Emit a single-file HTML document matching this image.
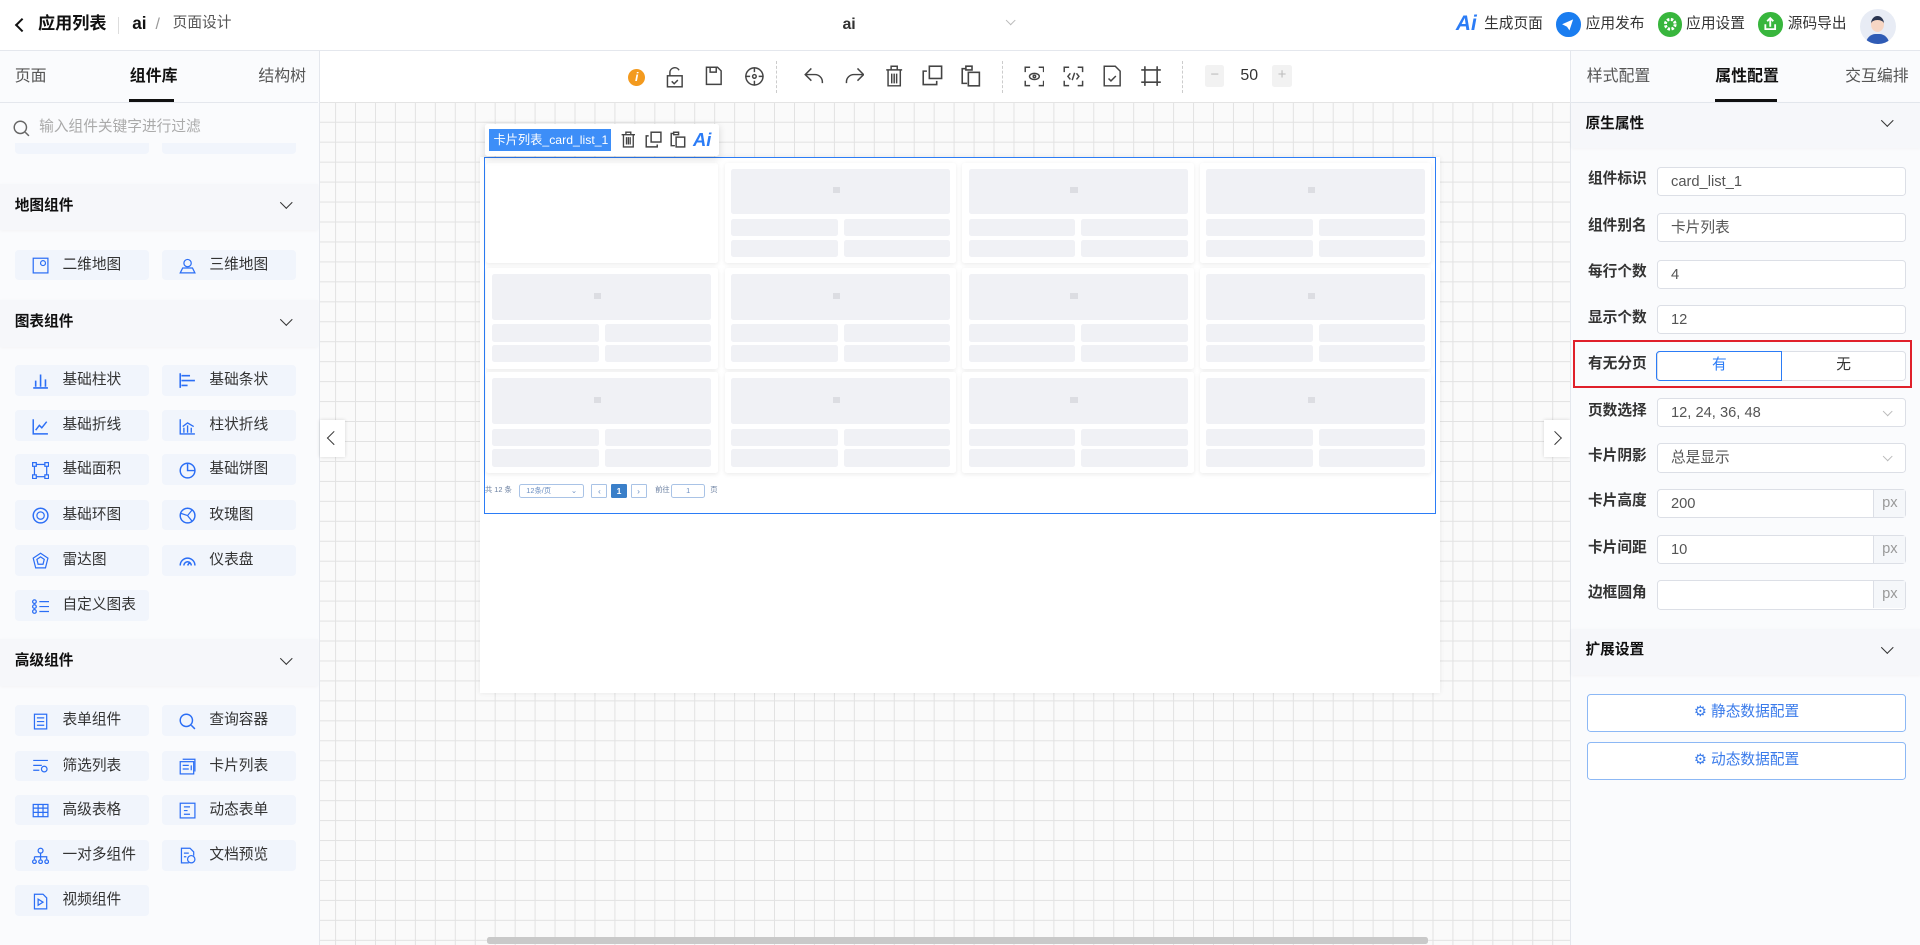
<!DOCTYPE html>
<html><head><meta charset="utf-8"><style>
*{box-sizing:border-box;margin:0;padding:0}
html,body{width:1920px;height:945px;overflow:hidden;background:#fff}
#w{zoom:1.2245;width:1568px;height:772px;position:relative;font-family:"Liberation Sans","Noto Sans CJK SC",sans-serif;font-size:12px;color:#333;line-height:1.2}
.a{position:absolute}
.hdr{left:0;top:0;width:1568px;height:42px;border-bottom:1px solid #e4e7ed;background:#fff}
.lp{left:0;top:42px;width:261px;height:730px;border-right:1px solid #e4e7ed;background:#fafbfd;overflow:hidden}
.rp{left:1282px;top:42px;width:286px;height:730px;border-left:1px solid #e4e7ed;background:#fafbfd}
.tab{position:absolute;top:0;height:42px;line-height:42px;font-size:13px;color:#555}
.tab.on{color:#111;font-weight:bold}
.sec{position:absolute;left:0;width:260px;height:38px;background:#f6f7fa;box-shadow:0 1px 3px rgba(0,0,0,.04);font-weight:bold;font-size:12px;color:#111;line-height:36px;padding-left:12px}
.chev{position:absolute;width:8px;height:8px;border-right:1.3px solid #333;border-bottom:1.3px solid #333;transform:rotate(45deg)}
.it{position:absolute;width:110px;height:25px;background:#f1f5fc;border-radius:3px;line-height:25px;font-size:12px;color:#333;padding-left:39px}
.it svg{position:absolute;left:14px;top:6px}
.cv{left:261px;top:84px;width:1021px;height:688px;background-color:#fafafa;background-image:linear-gradient(#e2e2e2 1px,transparent 1px),linear-gradient(90deg,#e2e2e2 1px,transparent 1px);background-size:16.3px 16.3px;background-position:-4px -1px}
.tb{left:261px;top:42px;width:1021px;height:42px;background:#fff;border-bottom:1px solid #e4e4e4}
.card{position:absolute;background:#fff;box-shadow:0 1px 4px rgba(0,0,0,.08);border-radius:2px}
.g{position:absolute;background:#f0f1f5;border-radius:2px}
.lbl{position:absolute;left:14px;font-size:12px;color:#333;font-weight:bold;line-height:14px}
.inp{position:absolute;left:70px;width:204px;height:24px;border:1px solid #dcdfe6;border-radius:3px;background:#fff;font-size:12px;color:#555;line-height:24px;padding-left:11px}
.px{position:absolute;right:0;top:0;width:26px;height:22px;background:#f5f7fa;border-left:1px solid #dcdfe6;color:#999;text-align:center;line-height:22px}
.btn{position:absolute;left:13px;width:261px;height:31px;border:1px solid #8cb8f5;border-radius:3px;background:#fff;color:#3a7bea;text-align:center;line-height:29px;font-size:12px}
</style></head><body><div id="w">

<div class="a hdr">
 <div class="a" style="left:14px;top:16px;width:8px;height:8px;border-left:2px solid #111;border-bottom:2px solid #111;transform:rotate(45deg)"></div>
 <div class="a" style="left:31px;top:11px;font-size:14px;font-weight:bold;color:#111">应用列表</div>
 <div class="a" style="left:96px;top:14px;width:1px;height:14px;background:#ddd"></div>
 <div class="a" style="left:108px;top:11px;font-size:14px;font-weight:bold;color:#111">ai</div>
 <div class="a" style="left:127px;top:12px;font-size:13px;color:#999">/</div>
 <div class="a" style="left:141px;top:12px;font-size:12px;color:#555">页面设计</div>
 <div class="a" style="left:688px;top:12px;font-size:13px;font-weight:bold;color:#333">ai</div>
 <div class="chev" style="left:822px;top:14px;border-color:#bbb;width:6px;height:6px;border-width:1px"></div>
 <div class="a" style="left:1189px;top:10px;font-size:17px;font-weight:bold;font-style:italic;color:#2b7cf6">Ai</div>
 <div class="a" style="left:1212px;top:13px;font-size:12px;color:#333">生成页面</div>
 <div class="a" style="left:1271px;top:10px;width:20px;height:20px;border-radius:50%;background:#1a7df0"><svg width="20" height="20" viewBox="0 0 20 20"><path d="M5 10l9-4-3 9-2-3z" fill="#fff"/></svg></div>
 <div class="a" style="left:1295px;top:13px;font-size:12px;color:#333">应用发布</div>
 <div class="a" style="left:1354px;top:10px;width:20px;height:20px;border-radius:50%;background:#38b63d"><svg width="20" height="20" viewBox="0 0 20 20"><circle cx="10" cy="10" r="4" fill="none" stroke="#fff" stroke-width="2.4" stroke-dasharray="2 1.2"/></svg></div>
 <div class="a" style="left:1377px;top:13px;font-size:12px;color:#333">应用设置</div>
 <div class="a" style="left:1436px;top:10px;width:20px;height:20px;border-radius:50%;background:#38b63d"><svg width="20" height="20" viewBox="0 0 20 20"><path d="M6 10v4h8v-4M10 12V5M7.5 7.5L10 5l2.5 2.5" fill="none" stroke="#fff" stroke-width="1.5"/></svg></div>
 <div class="a" style="left:1460px;top:13px;font-size:12px;color:#333">源码导出</div>
 <div class="a" style="left:1519px;top:7px;width:29px;height:29px;border-radius:50%;background:#e8ecf5;overflow:hidden"><div class="a" style="left:9px;top:6px;width:11px;height:13px;border-radius:50%;background:#f7d6c4;border-top:4px solid #2a3550"></div><div class="a" style="left:5px;top:21px;width:19px;height:10px;border-radius:8px 8px 0 0;background:#2f5bb5"></div></div>
</div>

<!-- left panel -->
<div class="a lp">
 <div class="tab" style="left:12px">页面</div>
 <div class="tab on" style="left:106px">组件库</div>
 <div class="a" style="left:105px;top:39px;width:37px;height:2px;background:#111"></div>
 <div class="tab" style="left:211px">结构树</div>
 <div class="a" style="left:0;top:41px;width:260px;height:1px;background:#e4e7ed"></div>
 <div class="a" style="left:0;top:42px;width:260px;height:33px;background:#fafbfd"></div>
 <svg class="a" style="left:11px;top:56px" width="14" height="14" viewBox="0 0 14 14"><circle cx="6" cy="6" r="5" fill="none" stroke="#666" stroke-width="1.2"/><path d="M10 10l3 3" stroke="#666" stroke-width="1.2"/></svg>
 <div class="a" style="left:32px;top:55px;font-size:12px;color:#aaa">输入组件关键字进行过滤</div>
 <div class="it" style="left:12px;top:75px;height:9px;border-radius:0 0 3px 3px"></div>
 <div class="it" style="left:132px;top:75px;height:9px;border-radius:0 0 3px 3px"></div>

 <div class="sec" style="top:108px">地图组件<div class="chev" style="left:230px;top:12px;width:7px;height:7px;border-width:1.2px"></div></div>
 <div class="it" style="left:12px;top:162px"><svg width="14" height="14"><rect x="1" y="1" width="12" height="12" fill="none" stroke="#2b6ef5"/><circle cx="9" cy="5" r="2" fill="none" stroke="#2b6ef5"/></svg>二维地图</div>
 <div class="it" style="left:132px;top:162px"><svg width="14" height="14"><circle cx="7" cy="5" r="3" fill="none" stroke="#2b6ef5"/><path d="M1 13h12l-2-4H3z" fill="none" stroke="#2b6ef5"/></svg>三维地图</div>

 <div class="sec" style="top:203px">图表组件<div class="chev" style="left:230px;top:12px;width:7px;height:7px;border-width:1.2px"></div></div>
 <div class="it" style="left:12px;top:256px"><svg width="14" height="14"><path d="M1 13h12M3 12V7M7 12V2M11 12V6" stroke="#2b6ef5" fill="none" stroke-width="1.3"/></svg>基础柱状</div>
 <div class="it" style="left:132px;top:256px"><svg width="14" height="14"><path d="M1 1v12M2 3h7M2 7h11M2 11h5" stroke="#2b6ef5" fill="none" stroke-width="1.3"/></svg>基础条状</div>
 <div class="it" style="left:12px;top:293px"><svg width="14" height="14"><path d="M1 1v12h12M3 10l3-4 2 2 4-5" stroke="#2b6ef5" fill="none" stroke-width="1.2"/></svg>基础折线</div>
 <div class="it" style="left:132px;top:293px"><svg width="14" height="14"><path d="M1 1v12h12M4 12V8M7 12V6M10 12V8M3 7l4-3 5 3" stroke="#2b6ef5" fill="none" stroke-width="1.1"/></svg>柱状折线</div>
 <div class="it" style="left:12px;top:329px"><svg width="14" height="14"><rect x="2" y="2" width="10" height="10" fill="none" stroke="#2b6ef5"/><rect x="0.5" y="0.5" width="3" height="3" fill="#f1f5fc" stroke="#2b6ef5"/><rect x="10.5" y="0.5" width="3" height="3" fill="#f1f5fc" stroke="#2b6ef5"/><rect x="0.5" y="10.5" width="3" height="3" fill="#f1f5fc" stroke="#2b6ef5"/><rect x="10.5" y="10.5" width="3" height="3" fill="#f1f5fc" stroke="#2b6ef5"/></svg>基础面积</div>
 <div class="it" style="left:132px;top:329px"><svg width="14" height="14"><circle cx="7" cy="7" r="6" fill="none" stroke="#2b6ef5" stroke-width="1.2"/><path d="M7 1v6h6" fill="none" stroke="#2b6ef5" stroke-width="1.2"/></svg>基础饼图</div>
 <div class="it" style="left:12px;top:366px"><svg width="14" height="14"><circle cx="7" cy="7" r="6" fill="none" stroke="#2b6ef5" stroke-width="1.2"/><circle cx="7" cy="7" r="3" fill="none" stroke="#2b6ef5"/></svg>基础环图</div>
 <div class="it" style="left:132px;top:366px"><svg width="14" height="14"><circle cx="7" cy="7" r="6" fill="none" stroke="#2b6ef5" stroke-width="1.2"/><path d="M1 5l6 2 4-5M7 7l4 5" fill="none" stroke="#2b6ef5"/></svg>玫瑰图</div>
 <div class="it" style="left:12px;top:403px"><svg width="14" height="14"><path d="M7 1l6 4-2 8H3L1 5z M7 4l3 2-1 4H5L4 6z" fill="none" stroke="#2b6ef5"/></svg>雷达图</div>
 <div class="it" style="left:132px;top:403px"><svg width="14" height="14"><path d="M1 11a6 6 0 0 1 12 0M4 11a3 3 0 0 1 6 0M7 11l2-3" fill="none" stroke="#2b6ef5" stroke-width="1.2"/></svg>仪表盘</div>
 <div class="it" style="left:12px;top:440px"><svg width="14" height="14"><path d="M6 3h8M6 7h8M6 11h8" stroke="#2b6ef5"/><circle cx="2" cy="3" r="1.5" fill="none" stroke="#2b6ef5"/><circle cx="2" cy="7" r="1.5" fill="none" stroke="#2b6ef5"/><circle cx="2" cy="11" r="1.5" fill="none" stroke="#2b6ef5"/></svg>自定义图表</div>

 <div class="sec" style="top:480px">高级组件<div class="chev" style="left:230px;top:12px;width:7px;height:7px;border-width:1.2px"></div></div>
 <div class="it" style="left:12px;top:534px"><svg width="14" height="14"><rect x="2" y="1" width="10" height="12" fill="none" stroke="#2b6ef5"/><path d="M4 4h6M4 7h6M4 10h6" stroke="#2b6ef5"/></svg>表单组件</div>
 <div class="it" style="left:132px;top:534px"><svg width="14" height="14"><circle cx="6" cy="6" r="5" fill="none" stroke="#2b6ef5" stroke-width="1.2"/><path d="M10 10l3 3" stroke="#2b6ef5" stroke-width="1.2"/></svg>查询容器</div>
 <div class="it" style="left:12px;top:571px"><svg width="14" height="14"><path d="M1 2h12M1 6h7M1 10h5" stroke="#2b6ef5"/><circle cx="10" cy="9" r="2.3" fill="none" stroke="#2b6ef5"/></svg>筛选列表</div>
 <div class="it" style="left:132px;top:571px"><svg width="14" height="14"><rect x="1" y="3" width="11" height="10" fill="none" stroke="#2b6ef5"/><path d="M3 1h10v10M3 6h5M3 9h5M10 6v4" fill="none" stroke="#2b6ef5"/></svg>卡片列表</div>
 <div class="it" style="left:12px;top:607px"><svg width="14" height="14"><rect x="1" y="2" width="12" height="10" fill="none" stroke="#2b6ef5"/><path d="M1 5h12M1 8.5h12M5 2v10M9 2v10" stroke="#2b6ef5"/></svg>高级表格</div>
 <div class="it" style="left:132px;top:607px"><svg width="14" height="14"><rect x="1" y="1" width="12" height="12" fill="none" stroke="#2b6ef5"/><path d="M4 4h5M4 7h3M4 10h5" stroke="#2b6ef5"/></svg>动态表单</div>
 <div class="it" style="left:12px;top:644px"><svg width="14" height="14"><circle cx="7" cy="3" r="2" fill="none" stroke="#2b6ef5"/><path d="M7 5v3M2 8h10v2M2 8v2M7 8v2" fill="none" stroke="#2b6ef5"/><circle cx="2" cy="12" r="1.5" fill="none" stroke="#2b6ef5"/><circle cx="7" cy="12" r="1.5" fill="none" stroke="#2b6ef5"/><circle cx="12" cy="12" r="1.5" fill="none" stroke="#2b6ef5"/></svg>一对多组件</div>
 <div class="it" style="left:132px;top:644px"><svg width="14" height="14"><path d="M8 13H2V1h7l3 3v3" fill="none" stroke="#2b6ef5"/><circle cx="10" cy="10" r="3" fill="none" stroke="#2b6ef5"/><path d="M4 5h4M4 8h2" stroke="#2b6ef5"/></svg>文档预览</div>
 <div class="it" style="left:12px;top:681px"><svg width="14" height="14"><path d="M2 1h7l3 3v9H2z" fill="none" stroke="#2b6ef5"/><path d="M5 5l4 2.5L5 10z" fill="none" stroke="#2b6ef5"/></svg>视频组件</div>
</div>

<!-- canvas -->
<div class="a cv"></div>
<div class="a tb">
 <div class="a" style="left:252px;top:14px;width:14px;height:14px;border-radius:50%;background:#f39a1e;color:#fff;font-size:10px;font-weight:bold;font-style:italic;text-align:center;line-height:14px">i</div>
 <svg class="a" style="left:282px;top:12px" width="16" height="18" viewBox="0 0 16 18" fill="none" stroke="#444" stroke-width="1.2"><path d="M4 8V5a4 4 0 0 1 7.5-1.5"/><rect x="2" y="8" width="12" height="9"/><path d="M5.5 12.5l2 2 3-3"/></svg>
 <svg class="a" style="left:314px;top:12px" width="16" height="16" fill="none" stroke="#444" stroke-width="1.2"><path d="M2 1h9l3 3v11H2z M5 1v4h5V1"/></svg>
 <svg class="a" style="left:347px;top:12px" width="17" height="17" fill="none" stroke="#444" stroke-width="1.2"><circle cx="8.5" cy="8.5" r="7"/><circle cx="8.5" cy="8.5" r="1.5"/><path d="M8.5 1v4M8.5 12v4M1 8.5h4M12 8.5h4"/></svg>
 <div class="a" style="left:373px;top:8px;width:1px;height:26px;border-left:1px dashed #ccc"></div>
 <svg class="a" style="left:396px;top:12px" width="17" height="16" fill="none" stroke="#444" stroke-width="1.2"><path d="M6 2L1 7l5 5M1 7h8a6 6 0 0 1 6 6v1"/></svg>
 <svg class="a" style="left:428px;top:12px" width="17" height="16" fill="none" stroke="#444" stroke-width="1.2"><path d="M11 2l5 5-5 5M16 7H8a6 6 0 0 0-6 6v1"/></svg>
 <svg class="a" style="left:462px;top:11px" width="15" height="18" fill="none" stroke="#444" stroke-width="1.2"><path d="M1 4h13M5 4V1h5v3M2.5 4v13h10V4M5.5 7v8M7.5 7v8M9.5 7v8"/></svg>
 <svg class="a" style="left:492px;top:11px" width="17" height="17" fill="none" stroke="#444" stroke-width="1.3"><rect x="6" y="1" width="10" height="10"/><path d="M4 5H1v11h11v-3"/></svg>
 <svg class="a" style="left:524px;top:11px" width="17" height="18" fill="none" stroke="#444" stroke-width="1.3"><path d="M4 3H1v12h4M4 1h5v3H4z"/><rect x="6" y="6" width="9" height="11"/></svg>
 <div class="a" style="left:557px;top:8px;width:1px;height:26px;border-left:1px dashed #ccc"></div>
 <svg class="a" style="left:575px;top:12px" width="17" height="17" fill="none" stroke="#444" stroke-width="1.2"><path d="M1 5V1h4M12 1h4v4M16 12v4h-4M5 16H1v-4"/><ellipse cx="8.5" cy="8.5" rx="4" ry="2.5"/><circle cx="8.5" cy="8.5" r="1"/></svg>
 <svg class="a" style="left:607px;top:12px" width="17" height="17" fill="none" stroke="#444" stroke-width="1.2"><path d="M1 5V1h4M12 1h4v4M16 12v4h-4M5 16H1v-4M6 6l-2 2.5 2 2.5M11 6l2 2.5-2 2.5M9.5 5.5l-2 6"/></svg>
 <svg class="a" style="left:640px;top:11px" width="15" height="18" fill="none" stroke="#444" stroke-width="1.2"><path d="M1 1h9l4 4v12H1z M4.5 11l2 2 4-4"/></svg>
 <svg class="a" style="left:670px;top:11px" width="18" height="18" fill="none" stroke="#444" stroke-width="1.3"><path d="M4 1v16M14 1v16M1 4h16M1 14h16"/></svg>
 <div class="a" style="left:704px;top:8px;width:1px;height:26px;border-left:1px dashed #ccc"></div>
 <div class="a" style="left:723px;top:11px;width:16px;height:18px;background:#f2f2f2;border-radius:2px;color:#bbb;text-align:center;line-height:17px">−</div>
 <div class="a" style="left:752px;top:12px;font-size:13px;color:#333">50</div>
 <div class="a" style="left:778px;top:11px;width:16px;height:18px;background:#f2f2f2;border-radius:2px;color:#bbb;text-align:center;line-height:17px">+</div>
</div>

<div class="a" style="left:392px;top:128px;width:784px;height:438px;background:#fff;box-shadow:0 0 4px rgba(0,0,0,.08)"></div>
<div class="a" style="left:395px;top:128px;width:778px;height:292px;border:1px solid #2b7cf6"></div>
<div id="cards"></div>

<div class="a" style="left:396px;top:101px;width:191px;height:26px;background:#fff;border-radius:2px;box-shadow:0 2px 6px rgba(0,0,0,.15)">
 <div class="a" style="left:3px;top:4px;width:100px;height:18px;background:#3d8ef8;color:#fff;font-size:10px;line-height:18px;padding-left:4px;white-space:nowrap;overflow:hidden">卡片列表_card_list_1</div>
 <svg class="a" style="left:111px;top:6px" width="12" height="14" fill="none" stroke="#444" stroke-width="1.1"><path d="M0.5 3h11M4 3V1h4v2M2 3v10h8V3M4.5 5v6M6 5v6M7.5 5v6"/></svg>
 <svg class="a" style="left:131px;top:6px" width="14" height="14" fill="none" stroke="#444" stroke-width="1.2"><rect x="5" y="1" width="8" height="8"/><path d="M3 4H1v9h9v-2"/></svg>
 <svg class="a" style="left:151px;top:6px" width="13" height="14" fill="none" stroke="#444" stroke-width="1.2"><path d="M3 2H1v10h3M3 1h4v2H3z"/><rect x="5" y="5" width="7" height="8"/></svg>
 <div class="a" style="left:170px;top:4px;font-size:15px;font-weight:bold;font-style:italic;color:#2b7cf6">Ai</div>
</div>

<!-- pagination -->
<div class="a" style="left:396px;top:397px;font-size:6px;color:#6a7fa0">共 12 条</div>
<div class="a" style="left:424px;top:395px;width:53px;height:12px;border:1px solid #a9c3e6;border-radius:2px;font-size:6px;color:#6a8ec2;line-height:10px;padding-left:5px">12条/页<span style="position:absolute;right:5px">⌄</span></div>
<div class="a" style="left:483px;top:395px;width:13px;height:12px;border:1px solid #a9c3e6;border-radius:1px;font-size:7px;color:#6a8ec2;text-align:center;line-height:10px">‹</div>
<div class="a" style="left:499px;top:395px;width:13px;height:12px;background:#3a7fc9;border-radius:1px;font-size:7px;color:#fff;font-weight:bold;text-align:center;line-height:12px">1</div>
<div class="a" style="left:515px;top:395px;width:13px;height:12px;border:1px solid #a9c3e6;border-radius:1px;font-size:7px;color:#6a8ec2;text-align:center;line-height:10px">›</div>
<div class="a" style="left:535px;top:397px;font-size:6px;color:#6a7fa0">前往</div>
<div class="a" style="left:548px;top:395px;width:28px;height:12px;border:1px solid #a9c3e6;border-radius:2px;font-size:6px;color:#6a8ec2;text-align:center;line-height:10px">1</div>
<div class="a" style="left:580px;top:397px;font-size:6px;color:#6a7fa0">页</div>

<div class="a" style="left:261px;top:343px;width:21px;height:30px;background:#fff;box-shadow:0 0 3px rgba(0,0,0,.15)"><div class="a" style="left:8px;top:11px;width:8px;height:8px;border-left:1.2px solid #333;border-bottom:1.2px solid #333;transform:rotate(45deg)"></div></div>
<div class="a" style="left:1261px;top:343px;width:21px;height:30px;background:#fff;box-shadow:0 0 3px rgba(0,0,0,.15)"><div class="a" style="left:5px;top:11px;width:8px;height:8px;border-right:1.2px solid #333;border-top:1.2px solid #333;transform:rotate(45deg)"></div></div>
<div class="a" style="left:398px;top:765px;width:768px;height:6px;background:#c9c9c9;border-radius:2px"></div>

<!-- right panel -->
<div class="a rp">
 <div class="tab" style="left:13px">样式配置</div>
 <div class="tab on" style="left:118px">属性配置</div>
 <div class="a" style="left:118px;top:39px;width:50px;height:2px;background:#111"></div>
 <div class="tab" style="left:224px">交互编排</div>
 <div class="a" style="left:0;top:41px;width:286px;height:1px;background:#e4e7ed"></div>
 <div class="sec" style="top:42px;width:286px;height:37px;line-height:35px">原生属性<div class="chev" style="left:255px;top:11px;width:7px;height:7px;border-width:1.2px"></div></div>
 <div class="lbl" style="top:98px">组件标识</div><div class="inp" style="top:94px">card_list_1</div>
 <div class="lbl" style="top:136px">组件别名</div><div class="inp" style="top:132px">卡片列表</div>
 <div class="lbl" style="top:174px">每行个数</div><div class="inp" style="top:170px">4</div>
 <div class="lbl" style="top:211px">显示个数</div><div class="inp" style="top:207px">12</div>
 <div class="a" style="left:2px;top:236px;width:277px;height:39px;border:2px solid #e0202a"></div>
 <div class="lbl" style="top:249px">有无分页</div>
 <div class="inp" style="top:245px;padding:0">
  <div class="a" style="left:-1px;top:-1px;width:103px;height:24px;border:1px solid #2b7cf6;border-radius:3px 0 0 3px;color:#2b7cf6;text-align:center;line-height:22px">有</div>
  <div class="a" style="left:102px;top:0;width:100px;text-align:center;color:#333;line-height:22px">无</div>
 </div>
 <div class="lbl" style="top:287px">页数选择</div><div class="inp" style="top:283px">12, 24, 36, 48<div class="chev" style="left:185px;top:7px;width:6px;height:6px;border-width:1px;border-color:#bbb"></div></div>
 <div class="lbl" style="top:324px">卡片阴影</div><div class="inp" style="top:320px">总是显示<div class="chev" style="left:185px;top:7px;width:6px;height:6px;border-width:1px;border-color:#bbb"></div></div>
 <div class="lbl" style="top:361px">卡片高度</div><div class="inp" style="top:357px">200<div class="px">px</div></div>
 <div class="lbl" style="top:399px">卡片间距</div><div class="inp" style="top:395px">10<div class="px">px</div></div>
 <div class="lbl" style="top:436px">边框圆角</div><div class="inp" style="top:432px"><div class="px">px</div></div>
 <div class="sec" style="top:472px;width:286px;height:37px;line-height:35px">扩展设置<div class="chev" style="left:255px;top:11px;width:7px;height:7px;border-width:1.2px"></div></div>
 <div class="btn" style="top:525px">⚙ 静态数据配置</div>
 <div class="btn" style="top:564px">⚙ 动态数据配置</div>
</div>

<script>
var xs=[397,592,786,980],ys=[133,219,304],h='';
for(var r=0;r<3;r++)for(var c=0;c<4;c++){var x=xs[c],y=ys[r],w=189;
h+='<div class="card" style="left:'+x+'px;top:'+y+'px;width:'+w+'px;height:82px">';
if(!(r==0&&c==0)){h+='<div class="g" style="left:5px;top:5px;width:179px;height:37px"></div><div class="a" style="left:88px;top:20px;width:6px;height:5px;background:#dcdde2"></div>';
h+='<div class="g" style="left:5px;top:46px;width:87px;height:14px"></div><div class="g" style="left:97px;top:46px;width:87px;height:14px"></div>';
h+='<div class="g" style="left:5px;top:63px;width:87px;height:14px"></div><div class="g" style="left:97px;top:63px;width:87px;height:14px"></div>';}
h+='</div>';}
document.getElementById('cards').innerHTML=h;
</script>
</div></body></html>
